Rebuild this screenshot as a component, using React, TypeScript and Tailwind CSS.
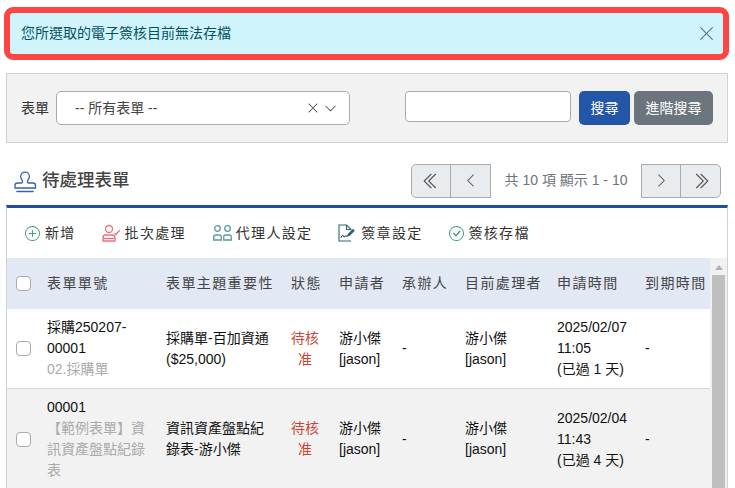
import { BsCheckCircle, BsChevronDoubleLeft, BsChevronDoubleRight, BsChevronDown, BsChevronLeft, BsChevronRight, BsPlusCircle, BsXLg } from "react-icons/bs";

function StampIcon() {
  return (
    <svg width="24" height="24" viewBox="0 0 24 24" fill="none" stroke="#3462ad" strokeWidth="1.3" className="shrink-0">
      <path d="M9.6 13c0-2.200-2-3-2-5.500a4.400 4.400 0 0 1 8.800 0c0 2.500-2 3.300-2 5.500 0 .7.500 1 1.200 1h4.400c1.500 0 2.500 1 2.500 2.500v2.500H2v-2.500C2 15 3 14 4.500 14h3.900c.7 0 1.200-.3 1.200-1z" />
      <path d="M4 22.500h16" strokeLinecap="round" strokeWidth="1.600" />
    </svg>
  );
}

function BatchIcon() {
  return (
    <svg width="18" height="18" viewBox="0 0 18 18" fill="none" stroke="#ee6f7f" strokeWidth="1.300" className="shrink-0">
      <circle cx="7" cy="5" r="3.500" />
      <path d="M1 17v-3.500c0-1.600 1-2.500 2.500-2.500h7c1.500 0 2.500.9 2.500 2.500V17z" />
      <path d="M1 14.500h12" />
      <path d="M13 9.500l1 1L17.500 6.500" strokeLinecap="round" />
    </svg>
  );
}

function AgentIcon() {
  return (
    <svg width="19" height="18" viewBox="0 0 19 18" fill="none" stroke="#5c98a0" strokeWidth="1.300" className="shrink-0">
      <circle cx="4.500" cy="4.500" r="2.800" />
      <circle cx="14.500" cy="4.500" r="2.800" />
      <path d="M.7 16v-3c0-1.300.8-2 2-2h3.600c1.200 0 2 .7 2 2v3z" />
      <path d="M10.700 16v-3c0-1.300.8-2 2-2h3.600c1.200 0 2 .7 2 2v3z" />
    </svg>
  );
}

function SignIcon() {
  return (
    <svg width="18" height="18" viewBox="0 0 18 18" fill="none" stroke="#2f6672" strokeWidth="1.100" className="shrink-0">
      <path d="M13 17H1V1h7.500L13 5.500v1" />
      <path d="M8.500 1v4.500H13" />
      <path d="M3 13.500c1-2 1.800-2.600 2.300-1.600s1 1.300 1.700.4 1.300-.8 1.800.2" strokeLinecap="round" />
      <path d="M9 12.500l.7-2.500 5.300-5.200 1.900 1.900-5.300 5.200z" fill="#2f6672" stroke="none" />
    </svg>
  );
}

function Check() {
  return <input type="checkbox" className="block appearance-none w-[15px] h-[15px] rounded-[4px] border border-[#aaaaaa] bg-white" />;
}

const headers = ["表單單號", "表單主題重要性", "狀態", "申請者", "承辦人", "目前處理者", "申請時間", "到期時間"];

const rows = [
  {
    no: "採購250207-00001",
    form: "02.採購單",
    subject: "採購單-百加資通 ($25,000)",
    date: "2025/02/07 11:05",
    passed: "(已過 1 天)",
    bg: "bg-white",
  },
  {
    no: "00001",
    form: "【範例表單】資訊資產盤點紀錄表",
    subject: "資訊資產盤點紀錄表-游小傑",
    date: "2025/02/04 11:43",
    passed: "(已過 4 天)",
    bg: "bg-[#f2f2f2]",
  },
];

export default function App() {
  return (
    <div className="w-[735px] h-[488px] overflow-hidden bg-white text-[14px] leading-[21px] text-[#111111] font-['Liberation_Sans','Noto_Sans_CJK_TC',sans-serif]">
      {/* Alert */}
      <div className="ml-1 mt-[7px] w-[725px] h-[53px] border-[6px] border-[#ff4444] rounded-[9px] bg-[#cff4fc] flex items-center justify-between pl-[11px] pr-[8px] text-[#055160]">
        <span>您所選取的電子簽核目前無法存檔</span>
        <BsXLg className="text-[#5f7478] text-[17px]" />
      </div>

      {/* Filter */}
      <div className="ml-[6px] mt-[13px] w-[722px] h-[70px] border border-[#d2d2d2] bg-[#f2f2f2] flex items-start pt-[17px] pl-[14px]">
        <span className="mt-[7px] w-[35px] text-[#333333]">表單</span>
        <div className="w-[294px] h-[34px] bg-white border border-[#aaaaaa] rounded-[5px] flex items-center pl-[18px] pr-[12px] text-[#444444]">
          <span className="flex-1">-- 所有表單 --</span>
          <BsXLg className="text-[#444444] text-[12px] mr-[5px]" />
          <BsChevronDown className="text-[#444444] text-[13px]" />
        </div>
        <input className="ml-[55px] w-[166px] h-[31px] bg-white border border-[#aaaaaa] rounded-[4px]" />
        <button className="ml-2 w-[51px] h-[34px] rounded-[5px] bg-[#2355a8] text-white">搜尋</button>
        <button className="ml-1 w-[79px] h-[34px] rounded-[5px] bg-[#6c757d] text-white">進階搜尋</button>
      </div>

      {/* Title and pager */}
      <div className="ml-[6px] mt-[21px] w-[715px] h-[33px] flex items-center justify-between">
        <div className="flex items-center gap-[5px] pl-[7px] text-[17.500px] font-medium text-[#444444]">
          <StampIcon />
          <span>待處理表單</span>
        </div>
        <div className="flex items-center text-[#6c757d]">
          <div className="flex h-[34px] w-[80px] bg-[#e9ecef] border border-[#aaaaaa] rounded-l-[5px] text-[#555555]">
            <span className="w-[39px] border-r border-[#aaaaaa] flex items-center justify-center"><BsChevronDoubleLeft className="text-[18px]" /></span>
            <span className="flex-1 flex items-center justify-center"><BsChevronLeft className="text-[15px]" /></span>
          </div>
          <span className="w-[150px] text-center">共 10 項 顯示 1 - 10</span>
          <div className="flex h-[34px] w-[80px] bg-[#e9ecef] border border-[#aaaaaa] rounded-r-[5px] text-[#555555]">
            <span className="w-[39px] border-r border-[#aaaaaa] flex items-center justify-center"><BsChevronRight className="text-[15px]" /></span>
            <span className="flex-1 flex items-center justify-center"><BsChevronDoubleRight className="text-[18px]" /></span>
          </div>
        </div>
      </div>

      {/* List */}
      <div className="ml-[6px] mt-[8px] w-[722px] border-t-[3px] border-[#214f9f] border-x border-x-[#d2d2d2]">
        <div className="h-[50px] flex items-center pl-[18px] tracking-[1.300px] text-[#333333]">
          <div className="flex items-center gap-[5px]"><BsPlusCircle className="text-[#3f9b75] text-[15px]" />新增</div>
          <div className="flex items-center gap-[5px] ml-[26px]"><BatchIcon />批次處理</div>
          <div className="flex items-center gap-[4px] ml-[27px]"><AgentIcon />代理人設定</div>
          <div className="flex items-center gap-[5px] ml-[26px]"><SignIcon />簽章設定</div>
          <div className="flex items-center gap-[5px] ml-[26px]"><BsCheckCircle className="text-[#3f9b75] text-[15px]" />簽核存檔</div>
        </div>

        <div className="flex">
          <table className="w-[703px] table-fixed border-separate border-spacing-0">
            <colgroup>
              <col className="w-[32px]" />
              <col className="w-[119px]" />
              <col className="w-[125px]" />
              <col className="w-[48px]" />
              <col className="w-[63px]" />
              <col className="w-[63px]" />
              <col className="w-[92px]" />
              <col className="w-[88px]" />
              <col className="w-[73px]" />
            </colgroup>
            <thead>
              <tr className="h-[51px] bg-[#e2e8f4] text-[#444444]">
                <th className="pl-[9px] font-normal"><Check /></th>
                {headers.map((h) => (
                  <th key={h} className="px-2 text-left font-normal tracking-[1.400px] whitespace-nowrap">{h}</th>
                ))}
              </tr>
            </thead>
            <tbody>
              {rows.map((r) => (
                <tr key={r.no} className={r.bg}>
                  <td className="pl-[9px] border-b border-[#d8d8d8]"><Check /></td>
                  <td className="p-2 border-b border-[#d8d8d8]">
                    {r.no}
                    <div className="text-[#aaaaaa]">{r.form}</div>
                  </td>
                  <td className="p-2 border-b border-[#d8d8d8]">{r.subject}</td>
                  <td className="pl-2 pr-3 py-2 border-b border-[#d8d8d8] text-center text-[#cc4433]">待核准</td>
                  <td className="p-2 border-b border-[#d8d8d8]">游小傑 [jason]</td>
                  <td className="p-2 border-b border-[#d8d8d8]">-</td>
                  <td className="p-2 border-b border-[#d8d8d8]">游小傑 [jason]</td>
                  <td className="p-2 border-b border-[#d8d8d8]">
                    {r.date}
                    <div>{r.passed}</div>
                  </td>
                  <td className="p-2 border-b border-[#d8d8d8]">-</td>
                </tr>
              ))}
            </tbody>
          </table>

          {/* Scrollbar */}
          <div className="w-[17px] bg-[#f1f1f1] pl-[2px] pr-[2px]">
            <div className="mt-[7px] ml-[3px] w-0 h-0 border-x-[4px] border-x-transparent border-b-[5px] border-b-[#b0b0b0]" />
            <div className="mt-[5px] h-[213px] bg-[#bfbfbf]" />
          </div>
        </div>
      </div>
    </div>
  );
}
